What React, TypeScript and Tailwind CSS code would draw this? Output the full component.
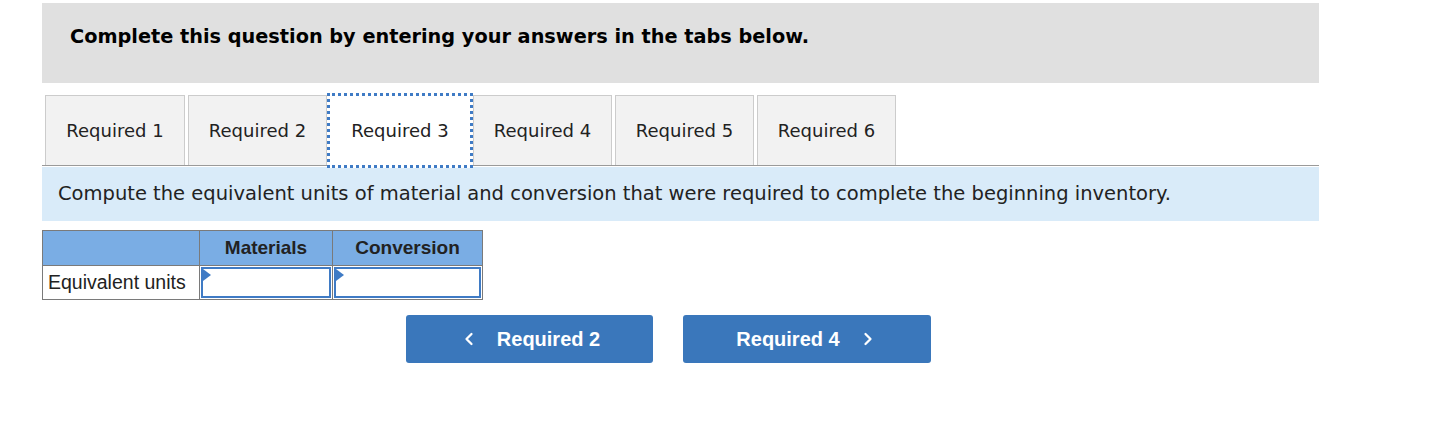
import { ChevronLeft, ChevronRight } from 'lucide-react';

const TABS = ['Required 1', 'Required 2', 'Required 3', 'Required 4', 'Required 5', 'Required 6'];
const ACTIVE = 2;

const tabFont = { fontFamily: '"DejaVu Sans", Verdana, sans-serif' };

function AnswerCell() {
    return (
        <td className="border border-[#7a7a7a] p-px h-[34px]">
            <div className="relative h-full border-2 border-[#3f7bc5] bg-white">
                <span className="absolute left-0 top-0 w-0 h-0 border-t-[6px] border-b-[6px] border-l-[8px] border-t-transparent border-b-transparent border-l-[#3f7bc5]" />
            </div>
        </td>
    );
}

export default function App() {
    return (
        <div className="w-[1441px] h-[447px] bg-white pt-[3px] pl-[42px]" style={tabFont}>
            <div className="w-[1277px]">
                {/* Instructions */}
                <div className="h-[80px] bg-[#e0e0e0] pl-[28px] pt-[20px]">
                    <p className="text-[19.3px] font-bold text-black">
                        Complete this question by entering your answers in the tabs below.
                    </p>
                </div>

                {/* Tabs */}
                <div className="mt-[12px] h-[71px] flex items-start gap-[3px] pl-[3px] border-b border-[#9a9a9a]">
                    {TABS.map((t, i) =>
                        i === ACTIVE ? (
                            <div
                                key={t}
                                className="relative h-[75px] w-[146px] -mt-[2px] -mx-[3px] flex items-center justify-center bg-white border-[3px] border-dotted border-[#3f7bc5] text-[18px] text-[#222]"
                            >
                                {t}
                            </div>
                        ) : (
                            <div
                                key={t}
                                className={`h-[70px] ${i === 0 ? 'w-[140px]' : 'w-[139px]'} flex items-center justify-center bg-[#f2f2f2] border border-b-0 border-[#cccccc] text-[18px] text-[#222]`}
                            >
                                {t}
                            </div>
                        )
                    )}
                </div>

                {/* Prompt */}
                <div className="mt-px h-[54px] bg-[#d9ebf9] pl-[16px] flex items-center">
                    <p className="text-[19.5px] text-[#222]">
                        Compute the equivalent units of material and conversion that were required to complete the beginning inventory.
                    </p>
                </div>

                {/* Answer table */}
                <table
                    className="mt-[9px] border-collapse"
                    style={{ fontFamily: '"Liberation Sans", Arial, sans-serif' }}
                >
                    <thead>
                        <tr className="bg-[#7aade4] h-[35px]">
                            <th className="w-[157px] border border-[#7a7a7a]" />
                            <th className="w-[133px] border border-[#7a7a7a] text-[19px] font-bold text-[#222]">Materials</th>
                            <th className="w-[150px] border border-[#7a7a7a] text-[19px] font-bold text-[#222]">Conversion</th>
                        </tr>
                    </thead>
                    <tbody>
                        <tr>
                            <td className="border border-[#7a7a7a] px-[5px] text-[19.5px] text-[#222] text-left whitespace-nowrap">Equivalent units</td>
                            <AnswerCell />
                            <AnswerCell />
                        </tr>
                    </tbody>
                </table>

                {/* Navigation */}
                <div className="mt-[15px] pl-[364px] flex gap-[30px]" style={{ fontFamily: '"Liberation Sans", Arial, sans-serif' }}>
                    <button className="w-[247px] h-[48px] rounded-[3px] bg-[#3a77bb] text-white text-[20px] font-bold flex items-center justify-center gap-[18px]">
                        <ChevronLeft size={20} strokeWidth={2.75} />
                        Required 2
                    </button>
                    <button className="w-[248px] h-[48px] rounded-[3px] bg-[#3a77bb] text-white text-[20px] font-bold flex items-center justify-center gap-[18px]">
                        Required 4
                        <ChevronRight size={20} strokeWidth={2.75} />
                    </button>
                </div>
            </div>
        </div>
    );
}
